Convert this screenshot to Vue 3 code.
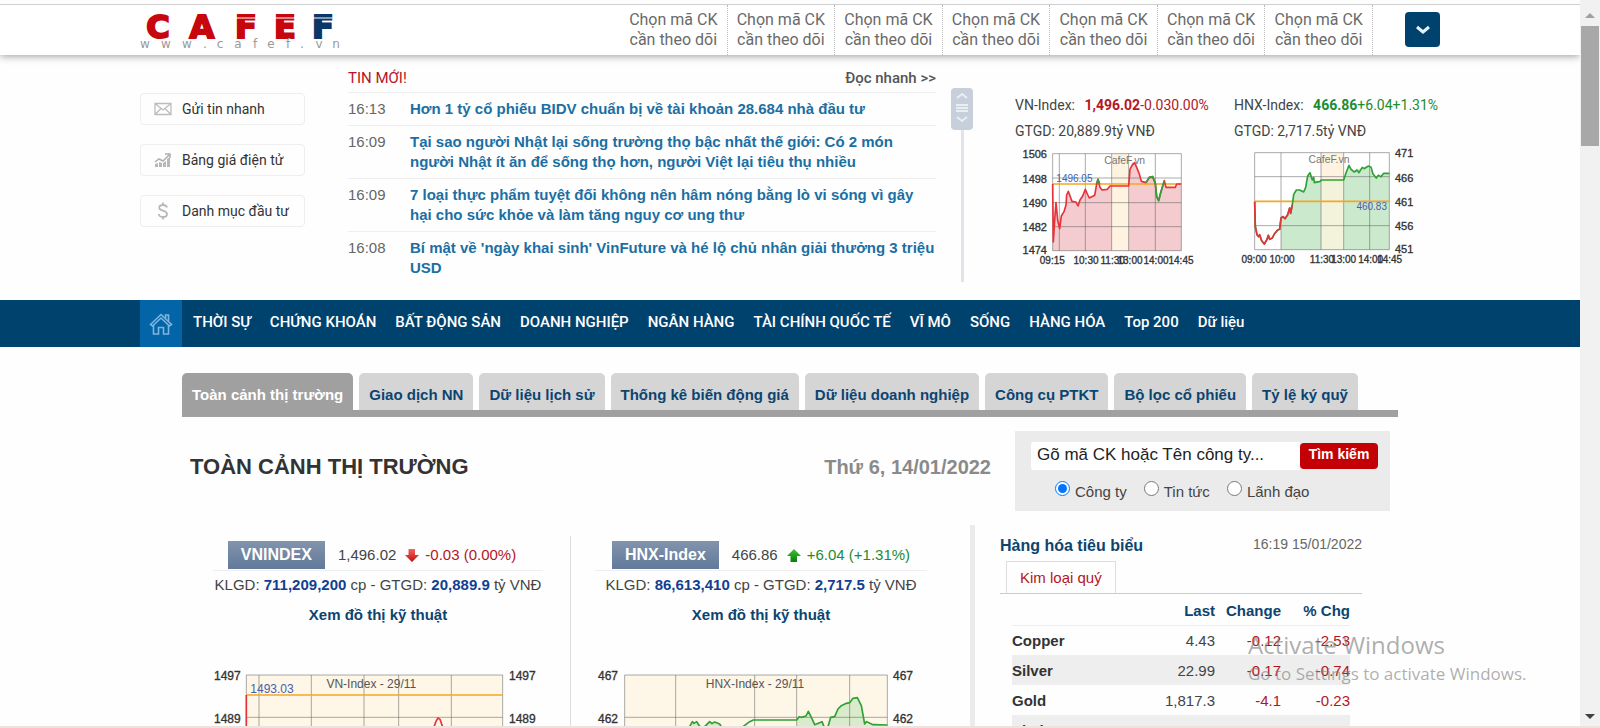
<script setup>
import { ref } from 'vue'

const watchSlots = 7
const shortcuts = [
  { icon: 'mail', label: 'Gửi tin nhanh' },
  { icon: 'chart', label: 'Bảng giá điện tử' },
  { icon: 'dollar', label: 'Danh mục đầu tư' },
]
const news = [
  { time: '16:13', title: 'Hơn 1 tỷ cổ phiếu BIDV chuẩn bị về tài khoản 28.684 nhà đầu tư' },
  { time: '16:09', title: 'Tại sao người Nhật lại sống trường thọ bậc nhất thế giới: Có 2 món người Nhật ít ăn để sống thọ hơn, người Việt lại tiêu thụ nhiều' },
  { time: '16:09', title: '7 loại thực phẩm tuyệt đối không nên hâm nóng bằng lò vi sóng vì gây hại cho sức khỏe và làm tăng nguy cơ ung thư' },
  { time: '16:08', title: "Bí mật về 'ngày khai sinh' VinFuture và hé lộ chủ nhân giải thưởng 3 triệu USD" },
]
const menu = ['THỜI SỰ', 'CHỨNG KHOÁN', 'BẤT ĐỘNG SẢN', 'DOANH NGHIỆP', 'NGÂN HÀNG', 'TÀI CHÍNH QUỐC TẾ', 'VĨ MÔ', 'SỐNG', 'HÀNG HÓA', 'Top 200', 'Dữ liệu']
const tabs = ['Toàn cảnh thị trường', 'Giao dịch NN', 'Dữ liệu lịch sử', 'Thống kê biến động giá', 'Dữ liệu doanh nghiệp', 'Công cụ PTKT', 'Bộ lọc cổ phiếu', 'Tỷ lệ ký quỹ']
const scopes = ['Công ty', 'Tin tức', 'Lãnh đạo']
const scope = ref('Công ty')
const keyword = ref('')
const metals = [
  { name: 'Copper', last: '4.43', change: '-0.12', pct: '-2.53' },
  { name: 'Silver', last: '22.99', change: '-0.17', pct: '-0.74' },
  { name: 'Gold', last: '1,817.3', change: '-4.1', pct: '-0.23' },
  { name: 'Platinum', last: '967.8', change: '-1.3', pct: '-0.14' },
]

const vnLine = 'M158 312 L160 486 L164 420 L168 368 L173 420 L179 446 L184 408 L192 395 L198 375 L200 345 L205 334 L210 348 L216 364 L228 366 L234 378 L240 360 L248 348 L256 328 L262 342 L268 354 L284 346 L290 312 L294 298 L300 322 L306 330 L322 328 L330 318 L386 318 L390 268 L396 256 L404 248 L410 262 L418 282 L424 304 L438 308 L448 292 L458 290 L466 310 L470 350 L476 362 L481 342 L488 318 L493 302 L498 322 L526 322 L530 312 L544 312'
const hnxLine = 'M763 365 L765 440 L770 464 L775 470 L778 464 L784 482 L792 492 L800 478 L804 466 L808 478 L816 474 L822 462 L832 450 L838 448 L842 414 L848 410 L854 416 L862 404 L868 384 L871 400 L876 374 L880 344 L888 330 L898 330 L910 336 L916 322 L922 288 L929 278 L936 300 L940 292 L942 308 L960 304 L962 300 L1030 300 L1038 276 L1046 256 L1052 268 L1062 276 L1070 270 L1076 278 L1086 262 L1092 266 L1104 258 L1112 262 L1118 282 L1128 294 L1134 286 L1142 290 L1150 280 L1167 280'
</script>

<template>
  <div class="page">
    <div class="content">
      <div class="edge"></div>
      <header class="masthead">
        <div class="wrap mast-row">
          <a href="#" class="logo" aria-label="CafeF">
            <svg width="202" height="42" viewBox="0 0 202 42">
              <text class="word" x="18 62 106 145 183" y="27" text-anchor="middle"><tspan class="red">CAFE</tspan><tspan class="navy">F</tspan></text>
              <path d="M92 7H161M169 7H202" stroke="#fff" stroke-width="1" />
              <text class="site" x="5 26 47 65 80 98 115 131 148 162 179 196" y="37" text-anchor="middle">www.cafef.vn</text>
            </svg>
          </a>
          <div class="watch">
            <a v-for="n in watchSlots" :key="n" href="#">Chọn mã CK<br />cần theo dõi</a>
          </div>
          <button class="expand" aria-label="Mở rộng">
            <svg width="16" height="12" viewBox="0 0 16 12"><path d="M2 3 L8 8 L14 3" fill="none" stroke="#e6f2fa" stroke-width="3" /></svg>
          </button>
        </div>
      </header>

      <section class="wrap top">
        <div class="shortcuts">
          <a v-for="s in shortcuts" :key="s.label" href="#">
            <svg v-if="s.icon === 'mail'" width="18" height="14" viewBox="0 0 18 14" fill="none" stroke="#bdbdbd" stroke-width="1.3">
              <path d="M1 1.5H17V12.5H1Z M1 1.5L9 8L17 1.5 M1 12.5L7 6.5 M17 12.5L11 6.5" />
            </svg>
            <svg v-else-if="s.icon === 'chart'" width="18" height="16" viewBox="0 0 18 16">
              <path d="M1 15V12L4 11V15ZM5 15V10L8 11V15ZM9 15V11L12 9V15ZM13 15V7L16 5V15Z" fill="#b8b8b8" />
              <path d="M1 10L5 7L9 9L15 3M11 2H16V6" fill="none" stroke="#b0b0b0" stroke-width="1.5" />
            </svg>
            <svg v-else width="18" height="18" viewBox="0 0 18 18" fill="none" stroke="#b8b8b8" stroke-width="1.800">
              <path d="M13 5.5C12.5 3.5 11 3 9 3C6.500 3 5.200 4 5.200 5.800C5.200 9.500 13 7.800 13 12C13 14 11.500 15 9 15C6.500 15 5 14 4.800 12M9 0.500V3M9 15V17.500" />
            </svg>
            <span>{{ s.label }}</span>
          </a>
        </div>

        <div class="news">
          <div class="news-head"><h2>TIN MỚI!</h2><a href="#">Đọc nhanh &gt;&gt;</a></div>
          <ul>
            <li v-for="n in news" :key="n.title"><time>{{ n.time }}</time><a href="#">{{ n.title }}</a></li>
          </ul>
        </div>

        <div class="slider">
          <div class="knob">
            <svg width="22" height="42" viewBox="0 0 22 42" fill="none" stroke="#e9eef3" stroke-width="2">
              <path d="M6 10L11 6L16 10M6 29L11 33L16 29" /><path d="M5 17H17M5 20H17M5 23H17" />
            </svg>
          </div>
        </div>

        <div class="quotes">
          <div class="quote">
            <p>VN-Index: <span class="down"><b>1,496.02</b>-0.030.00%</span></p>
            <p>GTGD: 20,889.9tỷ VNĐ</p>
            <svg class="mini" width="200" height="120" viewBox="45 210 600 360">
              <rect x="158" y="221" width="386" height="291" fill="#fff" />
              <path :d="vnLine + ' V512 H158 Z'" fill="#f4cccf" />
              <rect x="335" y="221" width="51" height="291" fill="#fdf3e0" />
              <path d="M158 221H544V512H158ZM178 221V512M256 221V512M335 221V512M386 221V512M466 221V512M158 294H544M158 368H544M158 440H544" class="grid" />
              <path d="M158 312H544" class="base" />
              <path :d="vnLine" class="trace red" />
              <path d="M290 312L294 298L299 312M438 308L448 292L458 290L466 310L470 350L476 362L481 342L488 318L493 302" class="trace green" />
              <text x="374" y="252" text-anchor="middle" class="brand">CafeF.vn</text>
              <text x="169" y="305" class="ref">1496.05</text>
              <g class="ylab" text-anchor="end"><text x="141" y="235">1506</text><text x="141" y="308">1498</text><text x="141" y="381">1490</text><text x="141" y="453">1482</text><text x="141" y="523">1474</text></g>
              <g class="xlab" text-anchor="middle"><text x="157" y="551">09:15</text><text x="258" y="551">10:30</text><text x="338" y="551">11:30</text><text x="390" y="551">13:00</text><text x="468" y="551">14:00</text><text x="543" y="551">14:45</text></g>
            </svg>
          </div>
          <div class="quote">
            <p>HNX-Index: <span class="up"><b>466.86</b>+6.04+1.31%</span></p>
            <p>GTGD: 2,717.5tỷ VNĐ</p>
            <svg class="mini" width="200" height="120" viewBox="701 210 600 360">
              <rect x="763" y="218" width="404" height="291" fill="#fff" />
              <path d="M842 509V414L848 410L854 416L862 404L868 384L876 374L880 344L888 330L898 330L910 336L916 322L922 288L929 278L936 300L960 304L1030 300L1038 276L1046 256L1062 276L1086 262L1104 258L1118 282L1128 294L1142 290L1150 280L1167 280V509Z" fill="#cbe9cc" />
              <rect x="962" y="218" width="68" height="291" fill="#fdf3e0" />
              <rect x="962" y="302" width="68" height="207" fill="#f3f2da" />
              <path d="M763 218H1167V509H763ZM842 218V509M962 218V509M1030 218V509M1108 218V509M763 290H1167M763 437H1167" class="grid" />
              <path d="M763 364H1167" class="base" />
              <path :d="hnxLine" class="trace green" />
              <path d="M763 365L765 440L770 464L775 470L778 464L784 482L792 492L800 478L804 466L808 478L816 474L822 462L832 450L838 448L842 414L848 410L854 416L862 404L868 384L871 400L876 374" class="trace red" />
              <text x="986" y="249" text-anchor="middle" class="brand">CafeF.vn</text>
              <text x="1160" y="389" text-anchor="end" class="ref">460.83</text>
              <g class="ylab"><text x="1184" y="231">471</text><text x="1184" y="306">466</text><text x="1184" y="378">461</text><text x="1184" y="449">456</text><text x="1184" y="520">451</text></g>
              <g class="xlab" text-anchor="middle"><text x="761" y="548">09:00</text><text x="845" y="548">10:00</text><text x="965" y="548">11:30</text><text x="1030" y="548">13:00</text><text x="1111" y="548">14:00</text><text x="1168" y="548">14:45</text></g>
            </svg>
          </div>
        </div>
      </section>

      <nav class="nav">
        <div class="wrap nav-row">
          <a href="#" class="home" aria-label="Trang chủ">
            <svg width="24" height="24" viewBox="0 0 24 24" fill="none" stroke="#7db4de" stroke-width="1.600">
              <path d="M1.500 12.500L12 2.500L22.500 12.500L20.500 14L12 6L3.500 14Z" /><path d="M4.500 13V22H9.500V15.500H14.500V22H19.500V13M16.500 6V3H19.500V9" />
            </svg>
          </a>
          <a v-for="m in menu" :key="m" href="#">{{ m }}</a>
        </div>
      </nav>

      <main class="main">
        <div class="tabs">
          <a v-for="(t, i) in tabs" :key="t" href="#" :class="{ active: i === 0 }">{{ t }}</a>
        </div>

        <div class="title-row">
          <h1>TOÀN CẢNH THỊ TRƯỜNG</h1>
          <span class="date">Thứ 6, 14/01/2022</span>
          <form class="search" @submit.prevent>
            <div class="field">
              <input v-model="keyword" type="text" aria-label="Tìm mã CK" placeholder="Gõ mã CK hoặc Tên công ty..." />
              <button type="submit">Tìm kiếm</button>
            </div>
            <div class="scopes">
              <label v-for="s in scopes" :key="s"><input v-model="scope" type="radio" name="scope" :value="s" /><span>{{ s }}</span></label>
            </div>
          </form>
        </div>

        <div class="panels">
          <section class="index first">
            <div class="index-head">
              <b class="badge">VNINDEX</b><span>1,496.02</span>
              <svg width="16" height="16" viewBox="0 0 16 16"><defs><linearGradient id="rd" x2="0" y2="1"><stop offset="0" stop-color="#f2655c" /><stop offset="1" stop-color="#c30b13" /></linearGradient></defs><path d="M4.500 2H11V8H15L8 15L1 8H4.500Z" fill="url(#rd)" /></svg>
              <span class="down">-0.03 (0.00%)</span>
            </div>
            <p>KLGD: <b>711,209,200</b> cp - GTGD: <b>20,889.9</b> tỷ VNĐ</p>
            <a href="#">Xem đồ thị kỹ thuật</a>
            <svg class="big" width="330" height="60" viewBox="103 448 990 180">
              <rect x="203" y="463" width="769" height="200" fill="#fef6e6" />
              <path d="M203 640V463H972V640M241 463V640M398 463V640M556 463V640M660 463V640M818 463V640M203 590H972" class="grid" />
              <path d="M203 523H972" class="base" />
              <path d="M203 523V640M764 625L772 602L778 592L784 596L794 625" class="trace red" />
              <text x="578" y="501" text-anchor="middle" class="cap">VN-Index - 29/11</text>
              <text x="215" y="517" class="ref">1493.03</text>
              <g class="ylab"><text x="186" y="479" text-anchor="end">1497</text><text x="186" y="606" text-anchor="end">1489</text><text x="991" y="479">1497</text><text x="991" y="606">1489</text></g>
            </svg>
          </section>

          <section class="index second">
            <div class="index-head">
              <b class="badge">HNX-Index</b><span>466.86</span>
              <svg width="16" height="16" viewBox="0 0 16 16"><defs><linearGradient id="gr" x2="0" y2="1"><stop offset="0" stop-color="#3fc234" /><stop offset="1" stop-color="#0a7d0a" /></linearGradient></defs><path d="M4.500 15H11V9H15L8 2L1 9H4.500Z" fill="url(#gr)" /></svg>
              <span class="up">+6.04 (+1.31%)</span>
            </div>
            <p>KLGD: <b>86,613,410</b> cp - GTGD: <b>2,717.5</b> tỷ VNĐ</p>
            <a href="#">Xem đồ thị kỹ thuật</a>
            <svg class="big" width="330" height="60" viewBox="81 448 990 180">
              <rect x="170" y="463" width="788" height="200" fill="#fef6e6" />
              <path d="M365 618L373 603L378 608L386 603L396 618ZM410 618L425 603L455 610L460 618ZM686 640V598L700 590L714 586L721 572L730 590L740 612L762 603L768 618L780 618L788 590L800 588L810 565L830 550L845 546L855 533L868 531L880 555L892 612L958 612V640Z" fill="#d9ebca" />
              <path d="M170 640V463H958V640M323 463V640M560 463V640M686 463V640M845 463V640M170 590H958" class="grid" />
              <path d="M365 618L373 603L378 608L386 603L396 618M410 618L425 603L432 609L440 604L455 610L460 618M525 618L545 603L556 598H686L694 588L700 590L714 586L721 572L730 590L740 612L762 603L768 618M780 618L788 590L800 588L810 565L820 555L835 548L845 546L855 533L868 531L880 555L890 610L896 603L915 612L958 613" class="trace green" />
              <text x="561" y="501" text-anchor="middle" class="cap">HNX-Index - 29/11</text>
              <g class="ylab"><text x="150" y="479" text-anchor="end">467</text><text x="150" y="606" text-anchor="end">462</text><text x="975" y="479">467</text><text x="975" y="606">462</text></g>
            </svg>
          </section>

          <aside class="goods">
            <div class="goods-head"><h3>Hàng hóa tiêu biểu</h3><time>16:19 15/01/2022</time></div>
            <div class="goods-tabs"><a href="#">Kim loại quý</a></div>
            <table>
              <thead><tr><th scope="col" aria-label="Tên"></th><th scope="col">Last</th><th scope="col">Change</th><th scope="col">% Chg</th></tr></thead>
              <tbody>
                <tr v-for="m in metals" :key="m.name"><th scope="row">{{ m.name }}</th><td>{{ m.last }}</td><td class="down">{{ m.change }}</td><td class="down">{{ m.pct }}</td></tr>
              </tbody>
            </table>
          </aside>
        </div>
      </main>
    </div>

    <div class="scrollbar">
      <svg width="20" height="26" viewBox="0 0 20 26"><path d="M5 18L10 13L15 18Z" fill="#a0a0a0" /></svg>
      <div class="thumb"></div>
      <svg width="20" height="26" viewBox="0 0 20 26"><path d="M5 12L15 12L10 17Z" fill="#404040" /></svg>
    </div>
    <div class="notice"><strong>Activate Windows</strong><span>Go to Settings to activate Windows.</span></div>
    <div class="bottom-edge"></div>
  </div>
</template>

<style>
body { margin: 0; background: #fff; }
</style>

<style scoped>
.page { position: relative; display: flex; height: 100vh; overflow: hidden; background: #fefefe; color: #444; font-family: "Liberation Sans", Arial, sans-serif; font-size: 15px; }
.page * { box-sizing: border-box; }
.content { flex: 1; min-width: 0; }
a { color: inherit; text-decoration: none; }
h1, h2, h3, p, ul { margin: 0; padding: 0; }
svg { display: block; }
.wrap { max-width: 1300px; margin: 0 auto; }
.down { color: #b5161f; }
.up { color: #218c2f; }

.edge { height: 5px; border-bottom: 1px solid #cfcfcf; background: #fdfdfd; }
.masthead { height: 50px; background: #fff; box-shadow: 0 1px 8px rgba(0, 0, 0, .4); clip-path: inset(0 0 -20px 0); }
.mast-row { display: flex; height: 50px; }
.logo { margin-top: 6px; }
.word { font: bold 32px "DejaVu Sans", sans-serif; stroke-width: 2; }
.word .red { fill: #c8060d; stroke: #c8060d; }
.word .navy { fill: #0a3768; stroke: #0a3768; }
.site { font: 12px "DejaVu Sans", sans-serif; fill: #999; }
.watch { display: grid; grid-template-columns: repeat(7, 1fr); width: 753px; margin-left: auto; font: 16px/20px Roboto, sans-serif; color: #6a6a6a; }
.watch a { padding: 5px 0; border-right: 1px dotted #bbb; text-align: center; }
.expand { display: grid; place-items: center; width: 35px; height: 35px; margin: 7px 0 0 32px; padding: 0; border: 0; border-radius: 4px; background: #00426e; }

.top { display: flex; padding: 13px 0 16px; }
.shortcuts { display: flex; flex: 0 0 165px; flex-direction: column; gap: 19px; margin: 25px 43px 0 0; }
.shortcuts a { display: flex; align-items: center; gap: 10px; height: 32px; padding-left: 13px; border: 1px solid #eee; border-radius: 4px; font: 14px Roboto, sans-serif; color: #333; }
.news { flex: 0 0 588px; }
.news-head { display: flex; justify-content: space-between; padding-bottom: 4px; font: 15px/20px Roboto, sans-serif; }
.news-head h2 { font: inherit; color: #b5161f; }
.news-head a { color: #555; font-weight: 500; }
.news ul { list-style: none; }
.news li { display: flex; padding: 6px 0; border-top: 1px solid #eee; line-height: 20px; }
.news time { flex: 0 0 62px; color: #666; }
.news li a { color: #1b6fa3; font-weight: bold; }
.slider { flex: 0 0 22px; height: 194px; margin: 20px 42px 0 15px; background: linear-gradient(#e2e4ea, #e2e4ea) center / 3px 100% no-repeat; }
.knob { height: 42px; border-radius: 4px; background: #c6cfda; }
.quotes { display: flex; flex: 1; min-width: 0; padding-top: 24px; font: 14px/26px Roboto, sans-serif; }
.quote { flex: 0 0 219px; white-space: nowrap; }
.quote p span { margin-left: 6px; }
.mini { margin-top: 6px; overflow: visible; }

.grid { fill: none; stroke: rgba(90, 90, 90, .5); stroke-width: 3; }
.base { fill: none; stroke: #f5a623; stroke-width: 5; }
.trace { fill: none; stroke-width: 5; stroke-linejoin: round; }
.trace.red { stroke: #e8323a; }
.trace.green { stroke: #2fa136; }
.xlab { font: 30px "Liberation Sans", sans-serif; fill: #333; stroke: #333; stroke-width: 1; }
.brand { font: 31px "Liberation Sans", sans-serif; fill: #777; }
.ref { font: 30px "Liberation Sans", sans-serif; fill: #4660ae; }
.ylab { font: 33px "Liberation Sans", sans-serif; fill: #333; stroke: #333; stroke-width: 1; }
.cap { font: 36px "Liberation Sans", sans-serif; fill: #555; }
.big .ref, .big .ylab { font-size: 36px; }

.nav { background: #00426e; }
.nav-row { display: flex; gap: 19px; height: 47px; font: 500 15px/33px Roboto, sans-serif; color: #fff; white-space: nowrap; }
.nav-row a { height: 33px; margin-top: 6px; }
.nav-row .home { display: grid; place-items: center; width: 42px; height: 47px; margin: 0 -8px 0 0; background: #0365a8; }

.main { width: 1216px; max-width: 100%; margin: 26px auto 0; }
.tabs { display: flex; gap: 6px; border-bottom: 7px solid #a0a0a0; font-weight: bold; color: #0c4470; white-space: nowrap; }
.tabs a { height: 37px; padding: 0 10px; border-radius: 5px 5px 0 0; background: #d5d5d5; line-height: 43px; }
.tabs .active { background: #a0a0a0; color: #fff; }
.title-row { display: flex; align-items: flex-start; margin-top: 14px; padding: 0 8px; }
h1 { margin-top: 22px; font-size: 22px; line-height: 28px; color: #333; }
.date { margin: 22px 24px 0 auto; font-size: 20px; font-weight: bold; line-height: 28px; color: #8a8a8a; }
.search { width: 375px; height: 80px; padding: 11px 12px 0 16px; background: #ebebeb; }
.field { display: flex; align-items: center; }
.field input { flex: 1; min-width: 0; height: 28px; padding: 0 6px 3px; border: 0; border-radius: 3px 0 0 3px; background: #fff; font: 17px "Liberation Sans", Arial, sans-serif; color: #222; }
.field input::placeholder { color: #222; opacity: 1; }
.field button { width: 78px; height: 26px; padding: 0 0 4px; border: 0; border-radius: 4px; background: #c40007; color: #fff; font: bold 14px "Liberation Sans", Arial, sans-serif; }
.scopes { display: flex; gap: 17px; padding: 10px 0 0 24px; }
.scopes label { display: flex; align-items: flex-start; gap: 5px; line-height: 23px; }
.scopes input { width: 15px; height: 15px; margin: 1px 0 0; accent-color: #0075ff; }

.panels { display: flex; margin-top: 14px; }
.index { flex: 0 0 389px; margin-top: 11px; padding: 3px 27px 0 31px; border-right: 1px solid #ddd; text-align: center; white-space: nowrap; }
.index.second { flex-basis: 399px; padding: 3px 43px 0 24px; border-right: 0; }
.index-head { display: flex; align-items: center; justify-content: center; height: 32px; border-bottom: 1px solid #eee; }
.first .index-head { padding-right: 12px; }
.badge { margin-right: 13px; padding: 0 13px; background: linear-gradient(#8294ad, #62799a); color: #fff; font-size: 16px; line-height: 28px; }
.index-head svg { margin: 0 5px 0 8px; }
.index p { padding-top: 3px; line-height: 22px; }
.index p b { color: #123f92; }
.index > a { display: block; padding-top: 8px; color: #0c4470; font-weight: bold; line-height: 22px; }
.big { margin-top: 44px; overflow: visible; }
.goods { flex: 1; padding: 11px 36px 0 25px; border-left: 5px solid #ebebeb; }
.goods-head { display: flex; justify-content: space-between; line-height: 20px; }
.goods-head h3 { font-size: 16px; color: #0c4470; }
.goods-head time { font-size: 14px; line-height: 16px; color: #666; }
.goods-tabs { display: flex; margin-top: 5px; padding: 0 6px; border-bottom: 1px solid #ccc; }
.goods-tabs a { padding: 0 13px; border: 1px solid #ddd; border-bottom: 0; line-height: 31px; color: #b5161f; }
table { width: 338px; margin: 2px 0 0 12px; border-collapse: collapse; table-layout: fixed; }
th, td { height: 30px; padding: 0; text-align: right; }
thead th { height: 29px; color: #0c4470; border-bottom: 1px solid #eee; }
th:first-child { width: 133px; text-align: left; }
th:nth-child(2) { width: 70px; }
th:nth-child(3) { width: 66px; }
tbody th { color: #333; }
tbody tr:nth-child(even) { background: #eee; }

.scrollbar { display: flex; flex-direction: column; flex: 0 0 20px; background: #f1f1f1; }
.thumb { width: 18px; height: 120px; margin: 0 1px auto; background: #a8a8a8; }
.notice { position: absolute; right: 66px; bottom: 40px; display: flex; flex-direction: column; width: 286px; color: rgba(120, 120, 120, .6); font-family: "Open Sans", sans-serif; white-space: nowrap; pointer-events: none; }
.notice strong { font-size: 24px; font-weight: 400; line-height: 30px; }
.notice span { font-size: 17px; line-height: 28px; }
.bottom-edge { position: absolute; right: 0; bottom: 0; left: 0; height: 2px; background: #eee2df; }
</style>
